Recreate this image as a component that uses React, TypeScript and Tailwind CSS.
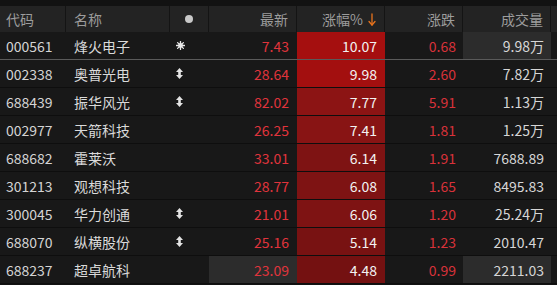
import React from 'react';

type Row = {
  code: string;
  name: string;
  mark?: 'star' | 'updown';
  price: string;
  pct: string;
  chg: string;
  vol: string;
  pctBg: string;
  priceHi?: boolean;
  volHi?: boolean;
};

const ROWS: Row[] = [
  { code: '000561', name: '烽火电子', mark: 'star', price: '7.43', pct: '10.07', chg: '0.68', vol: '9.98万', pctBg: 'bg-[#a50f0f]', volHi: true },
  { code: '002338', name: '奥普光电', mark: 'updown', price: '28.64', pct: '9.98', chg: '2.60', vol: '7.82万', pctBg: 'bg-[#a30f0f]' },
  { code: '688439', name: '振华风光', mark: 'updown', price: '82.02', pct: '7.77', chg: '5.91', vol: '1.13万', pctBg: 'bg-[#8c1414]' },
  { code: '002977', name: '天箭科技', price: '26.25', pct: '7.41', chg: '1.81', vol: '1.25万', pctBg: 'bg-[#881414]' },
  { code: '688682', name: '霍莱沃', price: '33.01', pct: '6.14', chg: '1.91', vol: '7688.89', pctBg: 'bg-[#7e1313]' },
  { code: '301213', name: '观想科技', price: '28.77', pct: '6.08', chg: '1.65', vol: '8495.83', pctBg: 'bg-[#7e1313]' },
  { code: '300045', name: '华力创通', mark: 'updown', price: '21.01', pct: '6.06', chg: '1.20', vol: '25.24万', pctBg: 'bg-[#7e1313]' },
  { code: '688070', name: '纵横股份', mark: 'updown', price: '25.16', pct: '5.14', chg: '1.23', vol: '2010.47', pctBg: 'bg-[#781212]' },
  { code: '688237', name: '超卓航科', price: '23.09', pct: '4.48', chg: '0.99', vol: '2211.03', pctBg: 'bg-[#741111]', priceHi: true, volHi: true },
];

const COLS = 'grid grid-cols-[66px_104px_39px_88px_88px_78px_88px_6px]';

function StarMark() {
  return (
    <svg width="9" height="9" viewBox="0 0 9 9" className="text-[#e8e8e8]">
      <g stroke="currentColor" strokeWidth="1.3" strokeLinecap="round">
        <line x1="4.5" y1="0.5" x2="4.5" y2="8.5" />
        <line x1="0.5" y1="4.5" x2="8.5" y2="4.5" />
        <line x1="1.6" y1="1.6" x2="7.4" y2="7.4" />
        <line x1="7.4" y1="1.6" x2="1.6" y2="7.4" />
      </g>
      <circle cx="4.5" cy="4.5" r="2.4" fill="currentColor" />
    </svg>
  );
}

function UpDownMark() {
  return (
    <svg width="7" height="11" viewBox="0 0 7 11" className="text-[#e4e4e4]">
      <path d="M3.5 0 L7 4 L0 4 Z" fill="currentColor" />
      <rect x="2.2" y="3.5" width="2.6" height="4" fill="currentColor" />
      <path d="M3.5 11 L7 7 L0 7 Z" fill="currentColor" />
    </svg>
  );
}

function SortArrow() {
  return (
    <svg width="8" height="13" viewBox="0 0 8 13" className="ml-[5px] text-[#e8731c]">
      <g stroke="currentColor" strokeWidth="1.3" fill="none" strokeLinecap="round" strokeLinejoin="round">
        <line x1="4" y1="1" x2="4" y2="12" />
        <polyline points="1,8.5 4,12 7,8.5" />
      </g>
    </svg>
  );
}

export default function App() {
  return (
    <div
      className="w-[557px] h-[285px] overflow-hidden bg-[#121212] text-[14px] leading-none"
      style={{ fontFamily: '"Noto Sans CJK SC", "Noto Sans", sans-serif' }}
    >
      <div className="h-[6px]" />
      {/* header */}
      <div className={`${COLS} h-[26px] bg-[#232323] text-[#9c9c9c]`}>
        <div className="flex items-center pl-[6px] border-r border-[#141414]">代码</div>
        <div className="flex items-center pl-[8px] border-r border-[#141414]">名称</div>
        <div className="flex items-center justify-center border-r border-[#141414]">
          <span className="w-[8px] h-[8px] rounded-full bg-[#c8c8c8]" />
        </div>
        <div className="flex items-center justify-end pr-[8px] border-r border-[#141414]">最新</div>
        <div className="flex items-center justify-end pr-[8px] border-r border-[#141414]">
          涨幅%
          <SortArrow />
        </div>
        <div className="flex items-center justify-end pr-[7px] border-r border-[#141414]">涨跌</div>
        <div className="flex items-center justify-end pr-[7px] border-r border-[#141414]">成交量</div>
        <div />
      </div>
      {/* rows */}
      {ROWS.map((r, i) => (
        <div
          key={r.code}
          className={`${COLS} h-[28px] bg-[#181818] border-b ${i === 0 ? 'border-[#5a5a5a]' : 'border-[#0e0e0e]'}`}
        >
          <div className="flex items-center pl-[6px] text-[#d4d4d4]">{r.code}</div>
          <div className="flex items-center pl-[8px] text-[#dadada]">{r.name}</div>
          <div className="flex items-center pl-[6px]">
            {r.mark === 'star' && <StarMark />}
            {r.mark === 'updown' && <UpDownMark />}
          </div>
          <div className={`flex items-center justify-end pr-[8px] text-[#e0343c] ${r.priceHi ? 'bg-[#2c2c2c]' : ''}`}>
            {r.price}
          </div>
          <div className={`flex items-center justify-end pr-[8px] text-[#f2f2f2] ${r.pctBg}`}>{r.pct}</div>
          <div className="flex items-center justify-end pr-[7px] text-[#d8323a]">{r.chg}</div>
          <div className={`flex items-center justify-end pr-[7px] text-[#d6d6d6] ${r.volHi ? 'bg-[#2c2c2c]' : ''}`}>
            {r.vol}
          </div>
          <div />
        </div>
      ))}
    </div>
  );
}
